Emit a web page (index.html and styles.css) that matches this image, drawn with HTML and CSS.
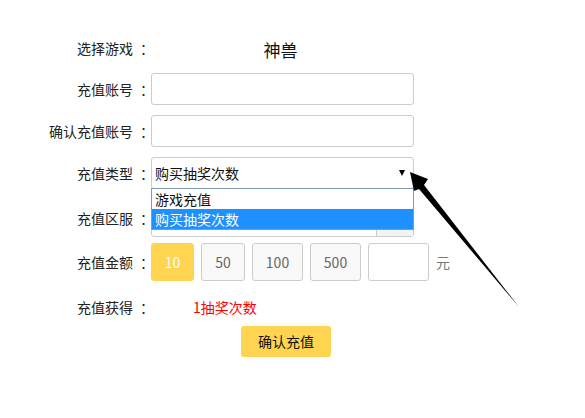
FILE: index.html
```html
<!DOCTYPE html>
<html lang="zh">
<head>
<meta charset="utf-8">
<link rel="stylesheet" href="styles.css">
</head>
<body>
<div class="page">
  <form class="form">
    <div class="row row-game">
      <label class="lbl">选择游戏<span class="colon">：</span></label>
      <div class="ctl"><span class="game">神兽</span></div>
    </div>
    <div class="row row-in">
      <label class="lbl">充值账号<span class="colon">：</span></label>
      <div class="ctl"><div class="input"></div></div>
    </div>
    <div class="row row-in">
      <label class="lbl">确认充值账号<span class="colon">：</span></label>
      <div class="ctl"><div class="input"></div></div>
    </div>
    <div class="row row-in">
      <label class="lbl">充值类型<span class="colon">：</span></label>
      <div class="ctl ctl-sel">
        <div class="input select"><span>购买抽奖次数</span><span class="tri"></span></div>
        <div class="list">
          <div class="opt">游戏充值</div>
          <div class="opt opt-on">购买抽奖次数</div>
        </div>
      </div>
    </div>
    <div class="row row-zone">
      <label class="lbl">充值区服<span class="colon">：</span></label>
      <div class="ctl"><div class="input zone"><span class="zone-btn"></span></div></div>
    </div>
    <div class="row row-amt">
      <label class="lbl">充值金额<span class="colon">：</span></label>
      <div class="ctl amts">
        <span class="amt amt-on w43">10</span>
        <span class="amt w44">50</span>
        <span class="amt w51">100</span>
        <span class="amt w51">500</span>
        <span class="amt amt-in"></span>
        <span class="yuan">元</span>
      </div>
    </div>
    <div class="row row-get">
      <label class="lbl">充值获得<span class="colon">：</span></label>
      <div class="ctl"><span class="get">1抽奖次数</span></div>
    </div>
    <div class="row row-btn">
      <div class="lbl"></div>
      <div class="ctl"><span class="submit">确认充值</span></div>
    </div>
  </form>
  <svg class="pointer" width="585" height="418" viewBox="0 0 585 418">
    <polygon points="410,172 428,179 424,185 519,307 419,189 414,191" fill="#000"/>
  </svg>
</div>
</body>
</html>
```
FILE: styles.css
```css
html, body {
  margin: 0;
  padding: 0;
  background: #fff;
}
body {
  font-family: "Microsoft YaHei", "Noto Sans CJK SC", "Noto Sans", sans-serif;
  font-size: 14px;
  color: #222;
}
.page {
  position: relative;
  width: 585px;
  height: 418px;
}
.form {
  display: flex;
  flex-direction: column;
  padding-top: 33px;
}
.row {
  display: flex;
  align-items: center;
}
.lbl {
  width: 147px;
  flex: none;
  text-align: right;
  margin-right: 4px;
  white-space: nowrap;
}
.colon {
  display: inline-block;
  width: 14px;
  text-indent: 7px;
  overflow: visible;
}
.ctl {
  width: 263px;
  flex: none;
}
.row-game {
  height: 30px;
  margin-bottom: 10px;
}
.game {
  display: block;
  width: 259px;
  text-align: center;
  font-size: 17px;
  color: #111;
  padding-top: 3px;
}
.row-in {
  height: 32px;
  margin-bottom: 10px;
}
.input {
  box-sizing: border-box;
  height: 32px;
  width: 263px;
  border: 1px solid #ccc;
  border-radius: 3px;
  background: #fff;
}
.ctl-sel {
  position: relative;
}
.select {
  display: flex;
  align-items: center;
  padding-left: 3px;
  color: #111;
}
.select span:first-child {
  flex: 1;
}
.tri {
  width: 0;
  height: 0;
  border-left: 3.5px solid transparent;
  border-right: 3.5px solid transparent;
  border-top: 6px solid #000;
  margin-right: 8px;
  margin-top: -1px;
}
.list {
  position: absolute;
  left: 0;
  top: 31px;
  box-sizing: border-box;
  width: 263px;
  border: 1px solid #7f9db9;
  background: #fff;
  z-index: 2;
}
.opt {
  height: 20px;
  line-height: 20px;
  padding-left: 3px;
  color: #111;
}
.opt-on {
  background: #1e90ff;
  color: #fff;
}
.row-zone {
  height: 38px;
  margin-bottom: 6px;
}
.zone {
  height: 38px;
  display: flex;
  justify-content: flex-end;
  overflow: hidden;
}
.zone-btn {
  width: 36px;
  border-left: 1px solid #ccc;
  background: #f3f3f3;
}
.row-amt {
  height: 38px;
  margin-bottom: 10px;
}
.amts {
  display: flex;
  align-items: center;
  gap: 7px;
  width: 320px;
}
.amt {
  box-sizing: border-box;
  height: 38px;
  line-height: 36px;
  text-align: center;
  border: 1px solid #ccc;
  border-radius: 3px;
  background: #f9f9f9;
  color: #666;
  font-size: 14px;
}
.w43 { width: 43px; }
.w44 { width: 44px; }
.w51 { width: 51px; }
.amt-on {
  background: #ffd450;
  border-color: #ffd450;
  color: #fff;
}
.amt-in {
  width: 61px;
  background: #fff;
}
.yuan {
  color: #777;
}
.row-get {
  height: 32px;
  margin-bottom: 3px;
}
.get {
  display: block;
  padding-left: 42px;
  color: #ff0000;
}
.row-btn {
  height: 31px;
}
.submit {
  display: block;
  margin-left: 90px;
  width: 90px;
  height: 31px;
  line-height: 31px;
  text-align: center;
  background: #ffd450;
  border-radius: 3px;
  color: #111;
}
.pointer {
  position: absolute;
  left: 0;
  top: 0;
  pointer-events: none;
  z-index: 3;
}
```
